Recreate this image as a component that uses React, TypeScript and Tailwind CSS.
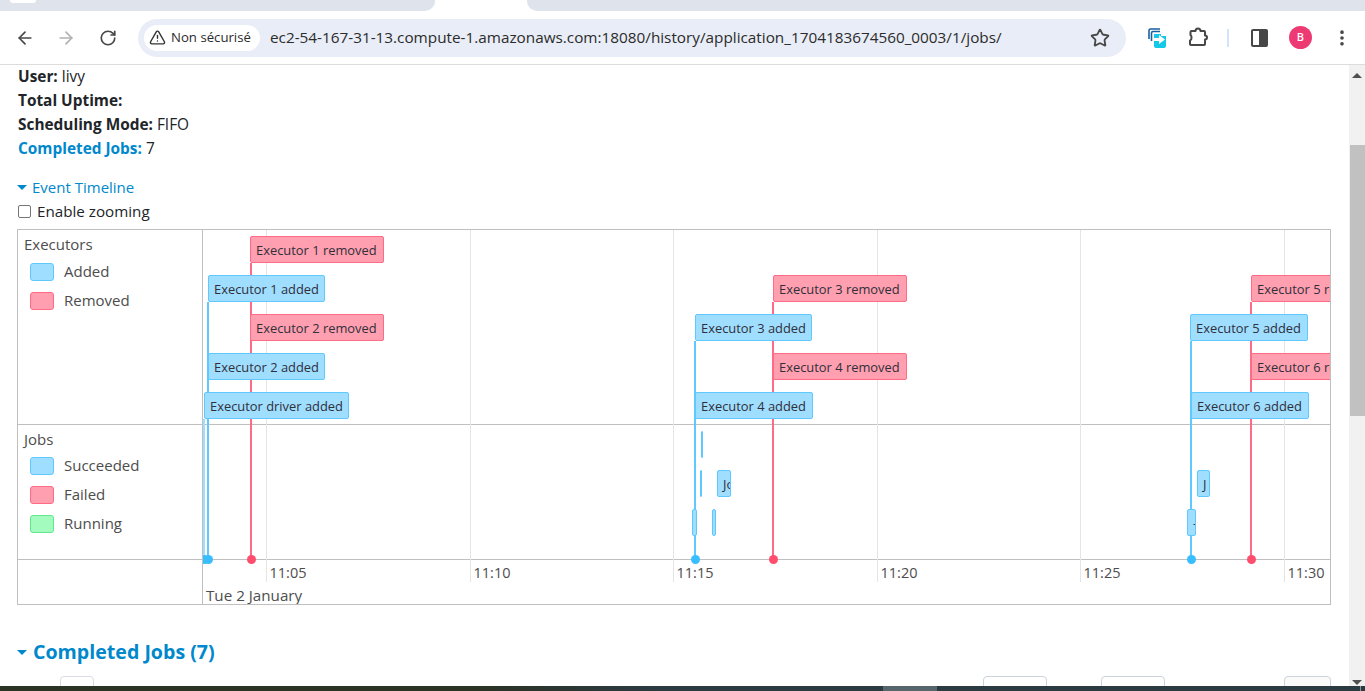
import { ArrowLeft, ArrowRight, RotateCw, Star, TriangleAlert, EllipsisVertical } from 'lucide-react';

const sans = 'font-["Open_Sans","Noto_Sans",sans-serif]';

type Item = { label: string; left: number; top: number; width: number; kind: 'added' | 'removed' };

// the timeline is a free canvas: every item sits at the time it happened
const boxes: Item[] = [
  { label: 'Executor 1 removed', left: 47, top: 6, width: 134, kind: 'removed' },
  { label: 'Executor 1 added', left: 5, top: 45, width: 117, kind: 'added' },
  { label: 'Executor 2 removed', left: 47, top: 84, width: 134, kind: 'removed' },
  { label: 'Executor 2 added', left: 5, top: 123, width: 117, kind: 'added' },
  { label: 'Executor driver added', left: 1, top: 162, width: 145, kind: 'added' },
  { label: 'Executor 3 removed', left: 570, top: 45, width: 134, kind: 'removed' },
  { label: 'Executor 3 added', left: 492, top: 84, width: 117, kind: 'added' },
  { label: 'Executor 4 removed', left: 570, top: 123, width: 134, kind: 'removed' },
  { label: 'Executor 4 added', left: 492, top: 162, width: 118, kind: 'added' },
  { label: 'Executor 5 removed', left: 1048, top: 45, width: 134, kind: 'removed' },
  { label: 'Executor 5 added', left: 987, top: 84, width: 118, kind: 'added' },
  { label: 'Executor 6 removed', left: 1048, top: 123, width: 134, kind: 'removed' },
  { label: 'Executor 6 added', left: 988, top: 162, width: 118, kind: 'added' },
];

const ticks = [
  { label: '11:05', x: 63 },
  { label: '11:10', x: 267 },
  { label: '11:15', x: 470 },
  { label: '11:20', x: 674 },
  { label: '11:25', x: 877 },
  { label: '11:30', x: 1081 },
];

const lines = [
  { x: 1, top: 189, color: 'bg-[#a0deff]', dot: 'bg-[#38bdff]' },
  { x: 5, top: 72, color: 'bg-[#5ec8ff]', dot: 'bg-[#38bdff]' },
  { x: 48, top: 33, color: 'bg-[#ff6b85]', dot: 'bg-[#ff4d6d]' },
  { x: 492, top: 111, color: 'bg-[#5ec8ff]', dot: 'bg-[#38bdff]' },
  { x: 570, top: 72, color: 'bg-[#ff6b85]', dot: 'bg-[#ff4d6d]' },
  { x: 988, top: 111, color: 'bg-[#5ec8ff]', dot: 'bg-[#38bdff]' },
  { x: 1048, top: 72, color: 'bg-[#ff6b85]', dot: 'bg-[#ff4d6d]' },
];

const jobs = [
  { left: 498, top: 201, width: 2, text: '' },
  { left: 497, top: 240, width: 2, text: '' },
  { left: 514, top: 240, width: 14, text: 'Jo' },
  { left: 489, top: 279, width: 5, text: '' },
  { left: 509, top: 279, width: 4, text: '' },
  { left: 994, top: 240, width: 13, text: 'J' },
  { left: 984, top: 279, width: 9, text: '-' },
];

function Legend({ color, label }: { color: string; label: string }) {
  return (
    <div className="flex items-center h-[29px] pl-[6px]">
      <span className={`w-[24px] h-[18px] rounded-[3px] border ${color}`} />
      <span className="ml-[10px] text-[15px] text-[#4d4d4d]">{label}</span>
    </div>
  );
}

function Timeline() {
  return (
    <div className={`ml-[17px] w-[1314px] h-[376px] border border-[#bfbfbf] flex ${sans}`}>
      <div className="w-[185px] shrink-0 border-r border-[#bfbfbf] flex flex-col">
        <div className="h-[195px] border-b border-[#bfbfbf] pt-[3px] pl-[6px]">
          <div className="text-[15px] text-[#4d4d4d] h-[24px]">Executors</div>
          <Legend color="bg-[#a0deff] border-[#5ec8ff]" label="Added" />
          <Legend color="bg-[#ff9fb0] border-[#ff6b85]" label="Removed" />
        </div>
        <div className="h-[135px] border-b border-[#bfbfbf] pt-[3px] pl-[6px]">
          <div className="text-[15px] text-[#4d4d4d] h-[23px]">Jobs</div>
          <Legend color="bg-[#a0deff] border-[#5ec8ff]" label="Succeeded" />
          <Legend color="bg-[#ff9fb0] border-[#ff6b85]" label="Failed" />
          <Legend color="bg-[#a3fcbd] border-[#5fe88c]" label="Running" />
        </div>
      </div>
      <div className="relative flex-1 overflow-hidden">
        <div className="absolute left-0 right-0 top-[194px] h-px bg-[#bfbfbf]" />
        <div className="absolute left-0 right-0 top-[329px] h-px bg-[#bfbfbf]" />
        {ticks.map((t) => (
          <div key={t.label}>
            <div className="absolute top-0 h-[352px] w-px bg-[#e5e5e5]" style={{ left: t.x }} />
            <div className="absolute top-[333px] text-[14.5px] leading-[20px] text-[#4d4d4d]" style={{ left: t.x + 3.5 }}>
              {t.label}
            </div>
          </div>
        ))}
        {lines.map((l) => (
          <div key={l.x}>
            <div className={`absolute w-[2px] ${l.color}`} style={{ left: l.x - 1, top: l.top, height: 329 - l.top }} />
            <div className={`absolute top-[325px] w-[9px] h-[9px] rounded-full ${l.dot}`} style={{ left: l.x - 4.5 }} />
          </div>
        ))}
        {boxes.map((b) => (
          <div
            key={b.label}
            className={`absolute h-[27px] rounded-[2px] border pl-[5px] text-[12.9px] leading-[26px] whitespace-nowrap overflow-hidden text-[#2f2f3a] ${
              b.kind === 'added' ? 'bg-[#a0deff] border-[#5ec8ff]' : 'bg-[#ff9fb0] border-[#ff6b85]'
            }`}
            style={{ left: b.left, top: b.top, width: b.width }}
          >
            {b.label}
          </div>
        ))}
        {jobs.map((j) => (
          <div
            key={`${j.left}-${j.top}`}
            className={`absolute h-[27px] rounded-[2px] border border-[#5ec8ff] bg-[#a0deff] text-[12.9px] leading-[26px] overflow-hidden text-[#2f2f3a] ${
              j.text ? 'pl-[5px]' : ''
            }`}
            style={{ left: j.left, top: j.top, width: j.width }}
          >
            {j.text}
          </div>
        ))}
        <div className="absolute left-[3px] top-[355px] text-[15.2px] leading-[20px] text-[#4d4d4d]">Tue 2 January</div>
      </div>
    </div>
  );
}

function Caret() {
  return <span className="inline-block border-x-[5px] border-x-transparent border-t-[5px] border-t-[#0088cc]" />;
}

function Toolbar() {
  return (
    <div className={`h-[54px] shrink-0 bg-white flex items-center pl-[15px] border-b border-[#dcdcdc] ${sans}`}>
      <ArrowLeft size={20} strokeWidth={2} className="text-[#474747]" />
      <ArrowRight size={20} strokeWidth={2} className="ml-[21px] text-[#b1b1b1]" />
      <RotateCw size={18} strokeWidth={2.2} className="ml-[23px] text-[#474747]" />
      <div className="ml-[21px] w-[988px] h-[38px] rounded-[19px] bg-[#e9edf7] flex items-center pl-[6px] pr-[16px]">
        <div className="h-[26px] w-[116px] rounded-[13px] bg-white flex items-center pl-[5px]">
          <TriangleAlert size={17} strokeWidth={2} className="text-[#333333]" />
          <span className="ml-[5px] text-[13.2px] font-medium text-[#2b2b2b] whitespace-nowrap">Non sécurisé</span>
        </div>
        <span className="ml-[10px] flex-1 text-[15.3px] text-[#2b2b2b] whitespace-nowrap">
          ec2-54-167-31-13.compute-1.amazonaws.com:18080/history/application_1704183674560_0003/1/jobs/
        </span>
        <Star size={20} strokeWidth={2.2} className="text-[#474747]" />
      </div>
      <svg className="ml-[22px]" width="19" height="20" viewBox="0 0 19 20">
        <path d="M1 11V2.500A1.500 1.500 0 0 1 2.500 1H12" fill="none" stroke="#1a5f9e" strokeWidth="1.6" />
        <path d="M3.500 13V5A1.500 1.500 0 0 1 5 3.500H12" fill="none" stroke="#1a5f9e" strokeWidth="1.6" />
        <path d="M6 6h7v2h5v10a2 2 0 0 1-2 2H8a2 2 0 0 1-2-2z" fill="#14c8e8" />
        <path d="M6 10h5V7l6 4.500-6 4.500v-3H6z" fill="#ffffff" />
      </svg>
      <svg className="ml-[20px] -mt-[1px] text-[#474747]" width="22" height="22" viewBox="0 0 22 22" fill="none" stroke="currentColor" strokeWidth="2" strokeLinejoin="round">
        <path d="M4.500 5H8.500a2.500 2.500 0 0 1 5 0H17a1 1 0 0 1 1 1v3.500a2 2 0 0 1 0 4V18a1 1 0 0 1-1 1H4a1 1 0 0 1-1-1v-3.500a3 3 0 0 0 1.500-3 3 3 0 0 0-1-2.500V6a1 1 0 0 1 1-1z" />
      </svg>
      <div className="ml-[18px] w-[2px] h-[18px] bg-[#d3e3fd]" />
      <div className="ml-[22px] w-[17px] h-[18px] rounded-[2px] border-2 border-[#474747] flex justify-end">
        <div className="w-[7px] bg-[#474747]" />
      </div>
      <div className="ml-[21px] w-[23px] h-[23px] rounded-full bg-[#ee3a73] flex items-center justify-center text-[11px] font-semibold text-white">
        B
      </div>
      <EllipsisVertical size={20} strokeWidth={2.4} className="ml-[20px] text-[#474747]" />
    </div>
  );
}

export default function App() {
  return (
    <div className={`w-[1365px] h-[691px] overflow-hidden flex flex-col bg-white ${sans}`}>
      <div className="h-[11px] shrink-0 flex bg-white">
        <div className="w-[435px] pl-[10px] bg-[#dee3ec] rounded-br-[10px]">
          <div className="w-[26px] h-[3px] rounded-b-[4px] bg-white" />
        </div>
        <div className="w-[92px] bg-white" />
        <div className="flex-1 bg-[#dee3ec] rounded-bl-[10px]" />
      </div>
      <Toolbar />
      <div className="flex-1 flex min-h-0 overflow-hidden">
        <div className="w-[1349px] min-w-0">
          <div className="pl-[18px] text-[15.4px] leading-[24px] text-[#212529]">
            <div><b className="font-bold">User:</b> livy</div>
            <div><b className="font-bold">Total Uptime:</b></div>
            <div><b className="font-bold">Scheduling Mode:</b> FIFO</div>
            <div><b className="font-bold text-[#0088cc]">Completed Jobs:</b> 7</div>
          </div>
          <div className="mt-[14px] pl-[17px] h-[24px] flex items-center text-[15px] text-[#0088cc]">
            <Caret />
            <span className="ml-[5px]">Event Timeline</span>
          </div>
          <div className="pl-[18px] h-[24px] flex items-center text-[15.2px] text-[#212529]">
            <span className="w-[13px] h-[13px] rounded-[2px] border border-[#767676] bg-white" />
            <span className="ml-[6px]">Enable zooming</span>
          </div>
          <div className="mt-[6px]">
            <Timeline />
          </div>
          <div className="mt-[33px] pl-[17px] h-[28px] flex items-center">
            <Caret />
            <span className="ml-[6px] text-[19.6px] font-bold text-[#0088cc]">Completed Jobs (7)</span>
          </div>
          <div className="mt-[10px] pl-[60px] flex">
            <div className="w-[34px] h-[20px] rounded-t-[4px] border border-[#d9dde3]" />
            <div className="ml-[889px] w-[64px] h-[20px] rounded-t-[4px] border border-[#ccd3dc]" />
            <div className="ml-[54px] w-[64px] h-[20px] rounded-t-[4px] border border-[#ccd3dc]" />
            <div className="ml-[119px] w-[47px] h-[20px] rounded-t-[4px] border border-[#ccd3dc] bg-[#fafafa]" />
          </div>
        </div>
        <div className="w-[16px] bg-[#f1f1f1] flex flex-col items-center">
          <span className="mt-[8px] border-x-[5px] border-x-transparent border-b-[5px] border-b-[#505050]" />
          <div className="mt-[67px] self-end w-[15px] h-[271px] bg-[#c1c1c1]" />
          <div className="flex-1" />
          <span className="mb-[1px] border-x-[5px] border-x-transparent border-t-[5px] border-t-[#505050]" />
        </div>
      </div>
      <div className="h-[5px] shrink-0 flex bg-gradient-to-r from-[#2b3324] from-[35%] to-[#2c3a42] to-[48%]">
        <div className="ml-[883px] w-[54px] h-full bg-[#56666c]" />
        <div className="ml-[423px] w-px h-full bg-[#8a9499]" />
      </div>
    </div>
  );
}
